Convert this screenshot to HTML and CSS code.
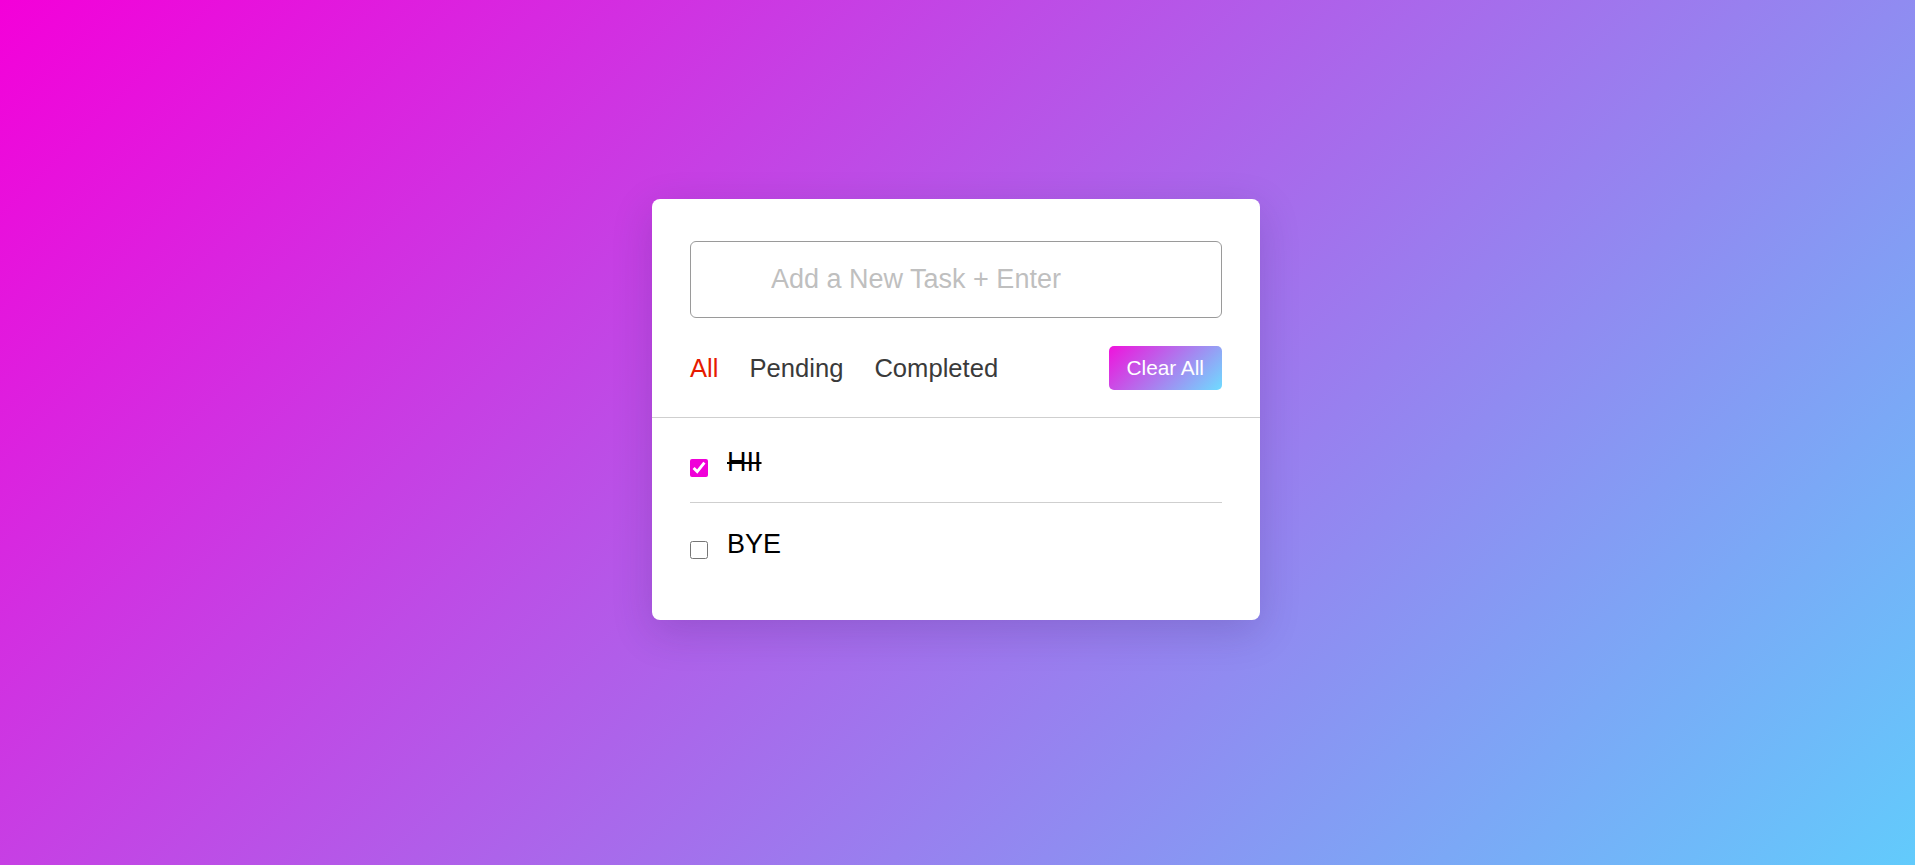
FILE: index.html
```html
<!DOCTYPE html>
<html lang="en">
<head>
<meta charset="utf-8">
<title>Todo</title>
<link rel="stylesheet" href="styles.css">
</head>
<body>
<main class="page">
  <section class="card">
    <div class="top">
      <input class="task-input" type="text" placeholder="Add a New Task + Enter">
      <div class="controls">
        <div class="filters">
          <span class="filter active">All</span>
          <span class="filter">Pending</span>
          <span class="filter">Completed</span>
        </div>
        <button class="clear-btn">Clear All</button>
      </div>
    </div>
    <ul class="tasks">
      <li class="task">
        <input class="check" type="checkbox" checked>
        <span class="task-text done">HII</span>
      </li>
      <li class="task">
        <input class="check" type="checkbox">
        <span class="task-text">BYE</span>
      </li>
    </ul>
  </section>
</main>
</body>
</html>
```
FILE: styles.css
```css
html, body {
  margin: 0;
  height: 100%;
}

body {
  background: linear-gradient(135deg, #f400d9 0%, #62cbfc 100%);
  font-family: "Liberation Sans", Arial, sans-serif;
}

.page {
  padding: 199px 3px 0 0;
}

.card {
  width: 608px;
  margin: 0 auto;
  background: #fff;
  border-radius: 8px;
  box-shadow: 0 12px 40px rgba(40, 20, 90, 0.18);
  padding-bottom: 36px;
}

.top {
  padding: 42px 38px 0;
  border-bottom: 1px solid #cfcfcf;
}

.task-input {
  display: block;
  box-sizing: border-box;
  width: 100%;
  height: 77px;
  border: 1px solid #9a9a9a;
  border-radius: 6px;
  padding: 0 0 0 80px;
  font-family: "Liberation Sans", Arial, sans-serif;
  font-size: 27px;
  color: #333;
  outline: none;
}

.task-input::placeholder {
  color: #bfbfbf;
}

.controls {
  display: flex;
  justify-content: space-between;
  align-items: center;
  margin-top: 28px;
  padding-bottom: 27px;
}

.filters {
  display: flex;
  gap: 31px;
}

.filter {
  font-size: 25.6px;
  color: #3a3a3a;
  cursor: pointer;
}

.filter.active {
  color: #e61a00;
}

.clear-btn {
  height: 44px;
  padding: 0 18px;
  border: none;
  border-radius: 5px;
  background: linear-gradient(135deg, #f012dc 0%, #6edcff 100%);
  color: #fff;
  font-family: "Liberation Sans", Arial, sans-serif;
  font-size: 20.8px;
  cursor: pointer;
}

.tasks {
  list-style: none;
  margin: 0;
  padding: 3px 38px 0;
}

.task {
  display: flex;
  align-items: flex-start;
  padding: 26px 0 24px;
  border-bottom: 1px solid #cfcfcf;
}

.task:last-child {
  border-bottom: none;
}

.check {
  width: 18px;
  height: 18px;
  margin: 12px 19px 0 0;
  accent-color: #f000d8;
  flex: none;
}

.task-text {
  font-size: 27px;
  line-height: 31px;
  color: #000;
}

.task-text.done {
  text-decoration: line-through;
}
```
